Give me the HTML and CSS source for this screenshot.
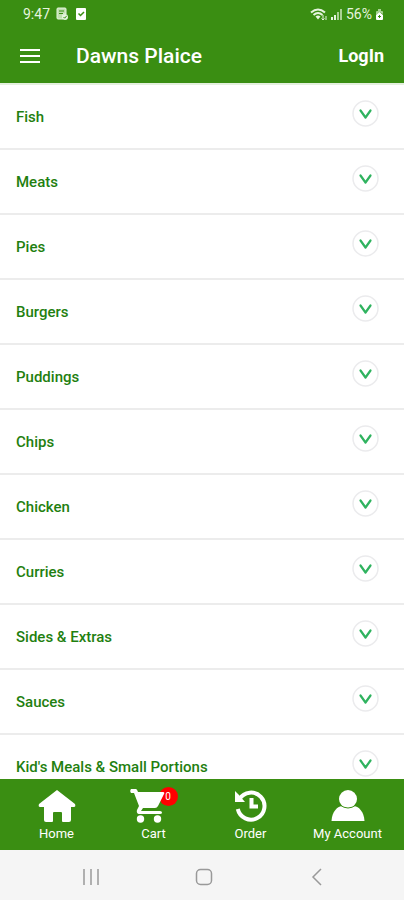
FILE: index.html
```html
<!DOCTYPE html>
<html lang="en">

<head>
  <meta charset="UTF-8">
  <meta name="viewport" content="width=device-width, initial-scale=1.0">
  <title>Dawns Plaice</title>
  <link rel="stylesheet" href="styles.css">
</head>

<body>
  <header>
    <div class="status-bar">
      <div class="status-group">
        <span class="clock">9:47</span>
        <svg width="13" height="14" viewBox="0 0 13 14">
          <path d="M2 1h7q1 0 1 1v5H7v5H2q-1 0-1-1V2q0-1 1-1z" fill="#bfe0ae" stroke="#e6f4df" />
          <path d="M3 4h5M3 6.500h4" stroke="#3a8e12" />
          <circle cx="9" cy="10" r="3" fill="#e6f4df" />
          <path d="M7.500 10l1.200 1.200 2-2.400" fill="none" stroke="#3a8e12" />
        </svg>
        <svg width="12" height="14" viewBox="0 0 12 14">
          <rect x="1" y="1" width="10" height="12" rx="1" fill="#fff" />
          <path d="M3.500 6.500l2 2 3.500-3.500" fill="none" stroke="#3a8e12" stroke-width="1.500" />
        </svg>
      </div>
      <div class="status-group status-right">
        <svg width="18" height="13" viewBox="0 0 18 13">
          <path d="M1 4.500Q8 -1.500 15 4.500M3.500 7Q8 3 12.500 7" fill="none" stroke="#e6f4df" stroke-width="2" />
          <path d="M5.500 8.500Q8 6.500 10.500 8.500L8 11.500z" fill="#e6f4df" />
          <path d="M13 7v5M11.500 10.500L13 12l1.500-1.500M16 12V8" fill="none" stroke="#e6f4df" />
        </svg>
        <svg width="12" height="13" viewBox="0 0 12 13">
          <path d="M0 9h2v3H0zM3 7h2v5H3z" fill="#e6f4df" />
          <path d="M6 4h2v8H6zM9 1h2v11H9z" fill="#a9d194" />
        </svg>
        <span>56%</span>
        <svg width="9" height="13" viewBox="0 0 9 13">
          <path d="M3 1h3v2h1q1 0 1 1v2L4.500 4 1 7V4q0-1 1-1h1z" fill="#a9d194" />
          <path d="M1 7l3.500-3L8 7v4q0 1-1 1H2q-1 0-1-1z" fill="#fff" />
          <path d="M4.500 7v3M3 8.500h3" stroke="#3a8e12" />
        </svg>
      </div>
    </div>
    <div class="app-bar">
      <button class="menu-button" aria-label="Menu">
        <svg width="20" height="14" viewBox="0 0 20 14">
          <path d="M0 1h20M0 7h20M0 13h20" stroke="#fff" stroke-width="2" />
        </svg>
      </button>
      <h1>Dawns Plaice</h1>
      <a class="login" href="#login">LogIn</a>
    </div>
  </header>

  <!-- Chevron shared by every category row -->
  <svg class="symbols" width="0" height="0">
    <symbol id="chevron" viewBox="0 0 27 27">
      <circle cx="13.500" cy="13.500" r="12.500" fill="#fff" stroke="#ebebed" stroke-width="1.500" />
      <path d="M8.500 10.500l5 7 5-7" fill="none" stroke="#2fb35f" stroke-width="2.200" stroke-linecap="round" stroke-linejoin="round" />
    </symbol>
  </svg>

  <main>
    <button class="category" aria-expanded="false"><span>Fish</span><svg><use href="#chevron" /></svg></button>
    <button class="category" aria-expanded="false"><span>Meats</span><svg><use href="#chevron" /></svg></button>
    <button class="category" aria-expanded="false"><span>Pies</span><svg><use href="#chevron" /></svg></button>
    <button class="category" aria-expanded="false"><span>Burgers</span><svg><use href="#chevron" /></svg></button>
    <button class="category" aria-expanded="false"><span>Puddings</span><svg><use href="#chevron" /></svg></button>
    <button class="category" aria-expanded="false"><span>Chips</span><svg><use href="#chevron" /></svg></button>
    <button class="category" aria-expanded="false"><span>Chicken</span><svg><use href="#chevron" /></svg></button>
    <button class="category" aria-expanded="false"><span>Curries</span><svg><use href="#chevron" /></svg></button>
    <button class="category" aria-expanded="false"><span>Sides &amp; Extras</span><svg><use href="#chevron" /></svg></button>
    <button class="category" aria-expanded="false"><span>Sauces</span><svg><use href="#chevron" /></svg></button>
    <button class="category" aria-expanded="false"><span>Kid's Meals &amp; Small Portions</span><svg><use href="#chevron" /></svg></button>
  </main>

  <nav class="tabs">
    <a href="#home">
      <svg width="38" height="34" viewBox="0 0 38 34">
        <path d="M19 1L37 15q1 3-1 3h-3v13q0 2-2 2h-6q-1 0-1-1v-8q0-1-1-1h-7q-1 0-1 1v8q0 1-1 1H8q-2 0-2-2V18H2q-2 0-1-3z" fill="#fff" />
      </svg>
      Home
    </a>
    <a href="#cart">
      <span class="cart-icon">
        <svg width="38" height="34" viewBox="0 0 38 34">
          <path d="M1 0h5q1 0 2 3h25q2 0 1 2l-6 12q-1 2-3 2H13l-2 3h19q2 0 2 1.500t-2 1.500H10q-4 0-3-4l2-4L4 4H1Q-.500 2 1 0z" fill="#fff" />
          <circle cx="10.500" cy="30" r="3.700" fill="#fff" />
          <circle cx="27.500" cy="30" r="3.700" fill="#fff" />
        </svg>
        <span class="badge">0</span>
      </span>
      Cart
    </a>
    <a href="#order">
      <svg width="34" height="34" viewBox="0 0 34 34">
        <path d="M5.500 10A13.500 13.500 0 1 1 3.800 20" fill="none" stroke="#fff" stroke-width="4" />
        <path d="M1 2l4 4 6 7H1z" fill="#fff" />
        <path d="M17.500 9v8.500H24" fill="none" stroke="#fff" stroke-width="4" />
      </svg>
      Order
    </a>
    <a href="#account">
      <svg width="34" height="34" viewBox="0 0 34 34">
        <path d="M.500 32C1 23 6 17 12 17h10c6 0 11 6 11.500 15z" fill="#fff" />
        <circle cx="17" cy="10" r="9" fill="#fff" />
        <path d="M9 16q8 6 16 0" fill="none" stroke="#3a8e12" />
      </svg>
      My Account
    </a>
  </nav>

  <footer class="system-bar">
    <button aria-label="Recent apps">
      <svg width="18" height="16" viewBox="0 0 18 16">
        <path d="M2 0v16M9 0v16M16 0v16" stroke="#999" stroke-width="1.500" />
      </svg>
    </button>
    <button aria-label="Home screen">
      <svg width="18" height="18" viewBox="0 0 18 18">
        <rect x="1.500" y="1.500" width="15" height="15" rx="4" fill="none" stroke="#999" stroke-width="1.500" />
      </svg>
    </button>
    <button aria-label="Back">
      <svg width="18" height="18" viewBox="0 0 18 18">
        <path d="M13 1L5 9l8 8" fill="none" stroke="#999" stroke-width="1.500" />
      </svg>
    </button>
  </footer>
</body>

</html>
```
FILE: styles.css
```css
/* Global styles */
* {
  box-sizing: border-box;
}

body {
  font-family: Roboto, sans-serif;
  margin: 0;
  height: 100vh;
  display: flex;
  flex-direction: column;
  background-color: #fff;
}

button {
  font: inherit;
  border: none;
  padding: 0;
  background: none;
  cursor: pointer;
}

a {
  color: #fff;
  text-decoration: none;
}

svg {
  display: block;
  flex-shrink: 0;
}

.symbols {
  position: absolute;
}

/* Header */
header {
  background-color: #3a8e12;
  color: #fff;
  border-bottom: 2px solid #e4f0de;
  background-clip: padding-box;
}

.status-bar {
  display: flex;
  justify-content: space-between;
  align-items: center;
  height: 28px;
  padding: 0 20px 0 23px;
  font-size: 14px;
  color: #e6f4df;
}

.status-group {
  display: flex;
  align-items: center;
  gap: 6px;
}

.status-right {
  gap: 3px;
}

.app-bar {
  display: flex;
  align-items: center;
  height: 55px;
  padding: 0 20px;
}

.menu-button {
  margin-right: 36px;
}

.app-bar h1 {
  font-size: 21px;
  font-weight: 500;
  margin: 0;
}

.login {
  margin-left: auto;
  font-size: 18px;
  font-weight: 700;
}

/* Category list */
main {
  flex: 1;
  min-height: 0;
  overflow: hidden;
}

.category {
  display: flex;
  align-items: flex-start;
  justify-content: space-between;
  width: 100%;
  padding: 15px 25px 13px 16px;
  border-bottom: 2px solid #ececec;
  font-size: 15px;
  font-weight: 500;
  line-height: 35px;
  color: #1f8010;
  text-align: left;
}

.category svg {
  width: 27px;
  height: 27px;
}

/* Bottom tabs */
.tabs {
  display: grid;
  grid-template-columns: repeat(4, 1fr);
  padding: 10px 8px 8px;
  background-color: #3a8e12;
}

.tabs a {
  display: flex;
  flex-direction: column;
  align-items: center;
  gap: 2px;
  font-size: 13px;
  line-height: 17px;
}

.cart-icon {
  position: relative;
  margin-right: 10px;
}

.badge {
  position: absolute;
  top: -2px;
  right: -10px;
  z-index: 1;
  width: 19px;
  height: 19px;
  border-radius: 50%;
  background-color: #f00;
  font-size: 10px;
  line-height: 19px;
  text-align: center;
}

.cart-icon svg {
  position: relative;
  z-index: 2;
}

/* Phone navigation */
.system-bar {
  display: flex;
  justify-content: space-around;
  align-items: center;
  height: 50px;
  padding: 3px 31px 0 35px;
  background-color: #f5f5f5;
}
```
